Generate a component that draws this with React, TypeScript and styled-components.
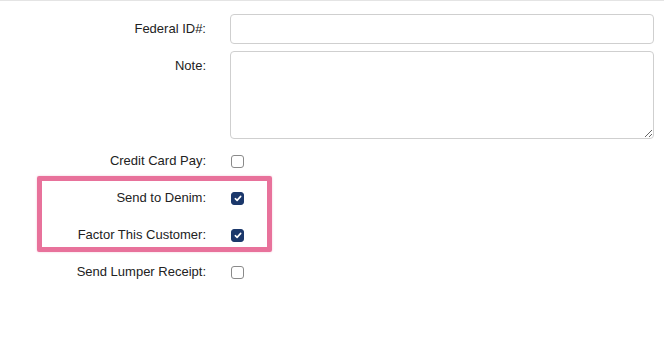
import React, { FunctionComponent, useState } from 'react';
import styled, { createGlobalStyle } from 'styled-components';

const GlobalStyle = createGlobalStyle`
  html, body {
    margin: 0;
    padding: 0;
    background: #ffffff;
  }
  body {
    font-family: 'Liberation Sans', Arial, sans-serif;
    color: #222222;
  }
`;

const Page = styled.div`
  width: 664px;
  height: 337px;
  box-sizing: border-box;
  border-top: 1px solid #e4e4e4;
  padding: 13px 10px 0 0;
`;

const Form = styled.form`
  display: flex;
  flex-direction: column;
  gap: 7px;
`;

type RowProps = {
  $top?: boolean;
};

const Row = styled.div<RowProps>`
  display: grid;
  grid-template-columns: 206px 1fr;
  column-gap: 24px;
  align-items: ${({ $top }) => ($top ? 'start' : 'center')};
  min-height: 30px;
`;

const Label = styled.label<RowProps>`
  text-align: right;
  font-size: 13px;
  line-height: 16px;
  color: #222222;
  padding-top: ${({ $top }) => ($top ? '7px' : '0')};
`;

const TextInput = styled.input`
  box-sizing: border-box;
  height: 30px;
  width: 100%;
  border: 1px solid #cfcfcf;
  border-radius: 4px;
  padding: 0 8px;
  font: inherit;
  font-size: 13px;
  outline: none;
`;

const TextArea = styled.textarea`
  box-sizing: border-box;
  display: block;
  height: 88px;
  width: 100%;
  border: 1px solid #cfcfcf;
  border-radius: 4px;
  padding: 6px 8px;
  font: inherit;
  font-size: 13px;
  outline: none;
  resize: vertical;
`;

const Highlight = styled.div`
  position: relative;
  display: flex;
  flex-direction: column;
  gap: 7px;

  &::after {
    content: '';
    position: absolute;
    top: -7px;
    bottom: -2px;
    left: 37px;
    width: 235px;
    box-sizing: border-box;
    border: 5px solid #e8729b;
    border-radius: 2px;
    box-shadow: 0 0 2px rgba(232, 114, 155, 0.45);
    pointer-events: none;
  }
`;

type BoxProps = {
  $checked: boolean;
};

const Box = styled.span<BoxProps>`
  display: flex;
  align-items: center;
  justify-content: center;
  width: 13px;
  height: 13px;
  margin-left: 1px;
  box-sizing: border-box;
  border-radius: 3px;
  border: 1px solid ${({ $checked }) => ($checked ? '#1b386b' : '#8a8a8a')};
  background: ${({ $checked }) => ($checked ? '#1b386b' : '#ffffff')};
  cursor: pointer;
`;

type CheckProps = {
  id: string;
  label: string;
  initial?: boolean;
};

const CheckRow: FunctionComponent<CheckProps> = ({ id, label, initial = false }) => {
  const [checked, setChecked] = useState(initial);

  return (
    <Row>
      <Label htmlFor={id}>{label}</Label>
      <Box id={id} role="checkbox" aria-checked={checked} $checked={checked} onClick={() => setChecked(!checked)}>
        {checked && (
          <svg width="8" height="7" viewBox="0 0 8 7" fill="none">
            <path d="M1.3 3.7 L3.1 5.4 L6.7 1.4" stroke="#ffffff" strokeWidth="1.6" strokeLinecap="round" strokeLinejoin="round" />
          </svg>
        )}
      </Box>
    </Row>
  );
};

export default function App() {
  return (
    <Page>
      <GlobalStyle />
      <Form>
        <Row>
          <Label htmlFor="federal-id">Federal ID#:</Label>
          <TextInput id="federal-id" type="text" />
        </Row>
        <Row $top>
          <Label htmlFor="note" $top>Note:</Label>
          <TextArea id="note" />
        </Row>
        <CheckRow id="credit-card" label="Credit Card Pay:" />
        <Highlight>
          <CheckRow id="denim" label="Send to Denim:" initial />
          <CheckRow id="factor" label="Factor This Customer:" initial />
        </Highlight>
        <CheckRow id="lumper" label="Send Lumper Receipt:" />
      </Form>
    </Page>
  );
}
